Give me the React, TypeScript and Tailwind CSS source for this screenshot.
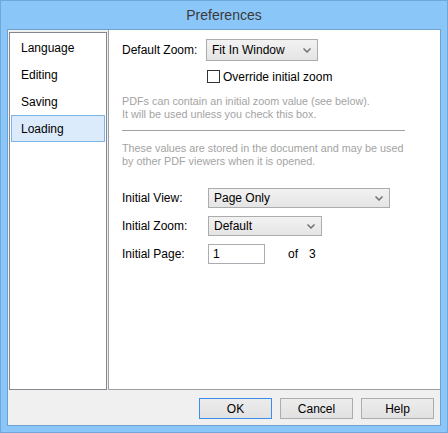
const font = { fontFamily: '"Liberation Sans", Arial, sans-serif' };

function Chevron() {
  return (
    <svg width="8" height="5" viewBox="0 0 8 5" className="shrink-0">
      <path d="M0.5 0.5 L4 4 L7.5 0.5" fill="none" stroke="#707070" strokeWidth="1.5" />
    </svg>
  );
}

function Combo({ value, width, height = 20 }: { value: string; width: number; height?: number }) {
  return (
    <div
      className="flex items-center justify-between border border-[#acacac] bg-gradient-to-b from-[#f2f2f2] to-[#e5e5e5] pl-[5px] pr-[6px] text-[12px] text-black"
      style={{ width, height }}
    >
      <span>{value}</span>
      <Chevron />
    </div>
  );
}

const sections = ["Language", "Editing", "Saving", "Loading"];

export default function App() {
  return (
    <div
      className="flex h-[433px] w-[448px] flex-col border border-[#6fa8dc] bg-[#8ac6f8]"
      style={font}
    >
      <div className="flex h-[28px] items-center justify-center text-[14px] text-[#3a3a3a]">
        Preferences
      </div>

      <div className="mx-[6px] flex h-[397px] flex-col border border-[#6ea0d0] bg-[#f0f0f0]">
        <div className="flex h-[360px]">
          <div className="ml-[1px] mt-[2px] h-[358px] w-[98px] border border-[#828790] bg-white pt-[1px]">
            {sections.map((s) => (
              <div
                key={s}
                className={
                  s === "Loading"
                    ? "mx-[1px] flex h-[27px] items-center border border-[#7db4ea] bg-[#dcebfc] pl-[9px] text-[12px] text-black"
                    : "mx-[1px] flex h-[27px] items-center pl-[10px] text-[12px] text-black"
                }
              >
                {s}
              </div>
            ))}
          </div>

          <div className="ml-[1px] flex-1 border-b border-l border-[#a0a0a0] bg-white pl-[13px] pt-[9px]">
            <div className="flex h-[22px] items-center">
              <span className="w-[84px] text-[12px] text-black">Default Zoom:</span>
              <Combo value="Fit In Window" width={112} height={22} />
            </div>

            <div className="mt-[9px] flex h-[13px] items-center pl-[85px]">
              <div className="h-[13px] w-[13px] border border-[#333] bg-white" />
              <span className="ml-[3px] text-[12px] text-black">Override initial zoom</span>
            </div>

            <div className="mt-[12px] text-[10.8px] leading-[13px] text-[#a3a3a3]">
              <div>PDFs can contain an initial zoom value (see below).</div>
              <div>It will be used unless you check this box.</div>
            </div>

            <div className="mt-[9px] h-px w-[283px] bg-[#a0a0a0]" />

            <div className="mt-[11px] text-[10.8px] leading-[13px] text-[#a3a3a3]">
              <div>These values are stored in the document and may be used</div>
              <div>by other PDF viewers when it is opened.</div>
            </div>

            <div className="mt-[20px] flex flex-col gap-[8px]">
              <div className="flex h-[20px] items-center">
                <span className="w-[86px] text-[12px] text-black">Initial View:</span>
                <Combo value="Page Only" width={182} />
              </div>
              <div className="flex h-[20px] items-center">
                <span className="w-[86px] text-[12px] text-black">Initial Zoom:</span>
                <Combo value="Default" width={114} />
              </div>
              <div className="flex h-[20px] items-center">
                <span className="w-[86px] text-[12px] text-black">Initial Page:</span>
                <div className="flex h-[20px] w-[57px] items-center border border-[#abadb3] bg-white pl-[4px] text-[12px] text-black">
                  1
                </div>
                <span className="ml-[23px] text-[12px] text-black">of</span>
                <span className="ml-[11px] text-[12px] text-black">3</span>
              </div>
            </div>
          </div>
        </div>

        <div className="mt-[8px] flex justify-end gap-[8px] pr-[6px]">
          <button className="h-[21px] w-[73px] border border-[#3c8ee8] bg-gradient-to-b from-[#ececec] to-[#e2e2e2] text-[12px] text-black">
            OK
          </button>
          <button className="h-[21px] w-[73px] border border-[#adadad] bg-gradient-to-b from-[#ececec] to-[#e2e2e2] text-[12px] text-black">
            Cancel
          </button>
          <button className="h-[21px] w-[73px] border border-[#adadad] bg-gradient-to-b from-[#ececec] to-[#e2e2e2] text-[12px] text-black">
            Help
          </button>
        </div>
      </div>
    </div>
  );
}
